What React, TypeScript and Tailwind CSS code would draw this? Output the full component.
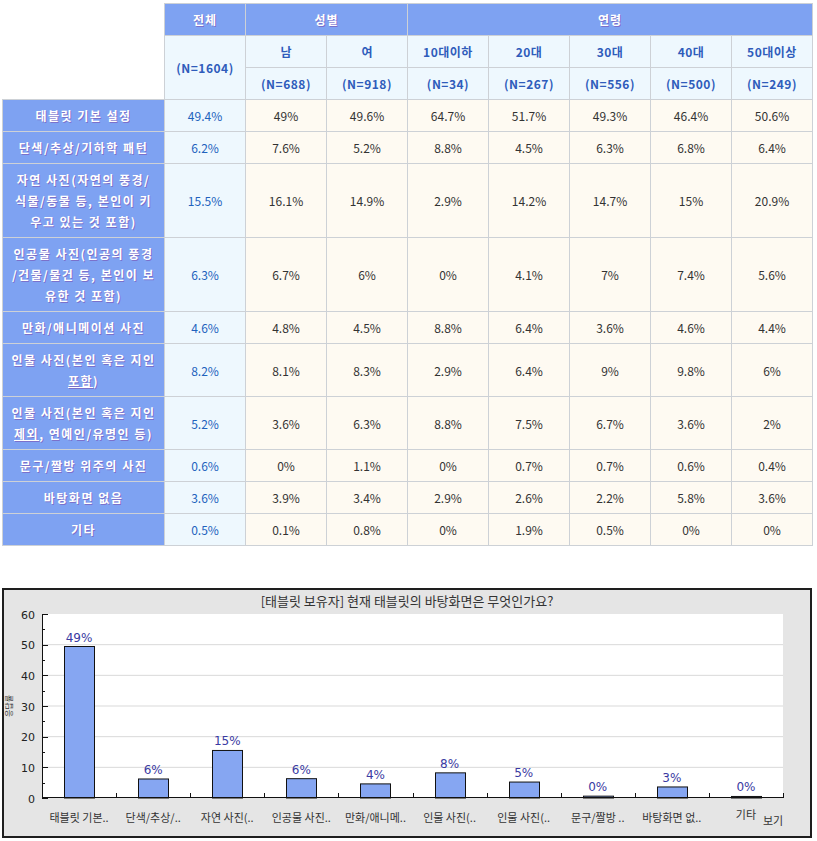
import React from "react";

const KR = '"Noto Sans CJK KR", "Noto Sans", sans-serif';

type Row = { label: React.ReactNode[]; vals: string[] };

const rows: Row[] = [
  { label: ["태블릿 기본 설정"], vals: ["49.4%", "49%", "49.6%", "64.7%", "51.7%", "49.3%", "46.4%", "50.6%"] },
  { label: ["단색/추상/기하학 패턴"], vals: ["6.2%", "7.6%", "5.2%", "8.8%", "4.5%", "6.3%", "6.8%", "6.4%"] },
  {
    label: ["자연 사진(자연의 풍경/", "식물/동물 등, 본인이 키", "우고 있는 것 포함)"],
    vals: ["15.5%", "16.1%", "14.9%", "2.9%", "14.2%", "14.7%", "15%", "20.9%"],
  },
  {
    label: ["인공물 사진(인공의 풍경", "/건물/물건 등, 본인이 보", "유한 것 포함)"],
    vals: ["6.3%", "6.7%", "6%", "0%", "4.1%", "7%", "7.4%", "5.6%"],
  },
  { label: ["만화/애니메이션 사진"], vals: ["4.6%", "4.8%", "4.5%", "8.8%", "6.4%", "3.6%", "4.6%", "4.4%"] },
  {
    label: [
      "인물 사진(본인 혹은 지인",
      <>
        <u>포함</u>)
      </>,
    ],
    vals: ["8.2%", "8.1%", "8.3%", "2.9%", "6.4%", "9%", "9.8%", "6%"],
  },
  {
    label: [
      "인물 사진(본인 혹은 지인",
      <>
        <u>제외</u>, 연예인/유명인 등)
      </>,
    ],
    vals: ["5.2%", "3.6%", "6.3%", "8.8%", "7.5%", "6.7%", "3.6%", "2%"],
  },
  { label: ["문구/짤방 위주의 사진"], vals: ["0.6%", "0%", "1.1%", "0%", "0.7%", "0.7%", "0.6%", "0.4%"] },
  { label: ["바탕화면 없음"], vals: ["3.6%", "3.9%", "3.4%", "2.9%", "2.6%", "2.2%", "5.8%", "3.6%"] },
  { label: ["기타"], vals: ["0.5%", "0.1%", "0.8%", "0%", "1.9%", "0.5%", "0%", "0%"] },
];

const ages = ["10대이하", "20대", "30대", "40대", "50대이상"];
const ns = ["(N=688)", "(N=918)", "(N=34)", "(N=267)", "(N=556)", "(N=500)", "(N=249)"];

const chartData = [
  { name: "태블릿 기본..", v: 49.4, l: "49%" },
  { name: "단색/추상/..", v: 6.2, l: "6%" },
  { name: "자연 사진(..", v: 15.5, l: "15%" },
  { name: "인공물 사진..", v: 6.3, l: "6%" },
  { name: "만화/애니메..", v: 4.6, l: "4%" },
  { name: "인물 사진(..", v: 8.2, l: "8%" },
  { name: "인물 사진(..", v: 5.2, l: "5%" },
  { name: "문구/짤방 ..", v: 0.6, l: "0%" },
  { name: "바탕화면 없..", v: 3.6, l: "3%" },
  { name: "기타", v: 0.5, l: "0%" },
];

const blueHead =
  "border border-[#cdd1d6] bg-[#7ea2f2] text-white font-bold py-[5px] leading-[21px] text-center [text-shadow:1px_1px_0_rgba(120,70,170,0.55)]";
const lightHead =
  "border border-[#cdd1d6] bg-[#eef8fe] text-[#2f5cbb] font-bold py-[5px] leading-[21px] text-center";

function Chart() {
  const x0 = 42;
  const x1 = 783;
  const yTop = 614;
  const yBot = 798;
  const scale = (yBot - yTop) / 60;
  const cw = (x1 - x0) / 10;
  const VF = '"DejaVu Sans", Verdana, sans-serif';
  return (
    <svg width={806} height={226} viewBox="4 610 806 226" className="block overflow-visible">
      <rect x={x0} y={yTop} width={x1 - x0} height={yBot - yTop} fill="#ffffff" />
      {[10, 20, 30, 40, 50].map((g) => (
        <line key={g} x1={x0} x2={x1} y1={yBot - g * scale} y2={yBot - g * scale} stroke="#d9d9d9" strokeWidth={1} />
      ))}
      {/* y axis */}
      <line x1={x0 + 0.5} x2={x0 + 0.5} y1={yTop} y2={yBot} stroke="#111" strokeWidth={1} />
      {[0, 10, 20, 30, 40, 50, 60].map((g) => (
        <g key={g}>
          <line x1={x0} x2={x0 + 6} y1={Math.round(yBot - g * scale) + 0.5} y2={Math.round(yBot - g * scale) + 0.5} stroke="#111" />
          <text
            x={35}
            y={yBot - g * scale + 1}
            textAnchor="end"
            dominantBaseline="central"
            fontFamily={VF}
            fontSize={11}
            fill="#222"
          >
            {g}
          </text>
        </g>
      ))}
      {[5, 15, 25, 35, 45, 55].map((g) => (
        <line key={g} x1={x0} x2={x0 + 3} y1={Math.round(yBot - g * scale) + 0.5} y2={Math.round(yBot - g * scale) + 0.5} stroke="#111" />
      ))}
      {/* bars */}
      {chartData.map((d, i) => {
        const cx = x0 + cw * (i + 0.5);
        const h = d.v * scale;
        return (
          <g key={i}>
            <rect x={Math.round(cx - 15) + 0.5} y={yBot - h} width={30} height={h} fill="#86a6f2" stroke="#111" strokeWidth={1} />
            <text
              x={cx}
              y={yBot - h - 9}
              textAnchor="middle"
              dominantBaseline="central"
              fontFamily={VF}
              fontSize={12}
              fill="#3a3aa2"
            >
              {d.l}
            </text>
            <text
              x={cx}
              y={i === 9 ? 814 : 817}
              textAnchor="middle"
              dominantBaseline="central"
              fontFamily={KR}
              fontSize={11}
              fill="#333"
            >
              {d.name}
            </text>
          </g>
        );
      })}
      {/* x axis */}
      <line x1={x0} x2={x1} y1={yBot - 0.5} y2={yBot - 0.5} stroke="#111" strokeWidth={1} />
      {Array.from({ length: 10 }).map((_, i) => (
        <line
          key={i}
          x1={Math.round(x0 + cw * (i + 1)) + 0.5}
          x2={Math.round(x0 + cw * (i + 1)) + 0.5}
          y1={yBot - 5}
          y2={yBot}
          stroke="#111"
        />
      ))}
      <text x={773} y={820} textAnchor="middle" dominantBaseline="central" fontFamily={KR} fontSize={11} fill="#333">
        보기
      </text>
      <text
        x={8}
        y={706}
        textAnchor="middle"
        dominantBaseline="central"
        fontFamily={KR}
        fontSize={8}
        fill="#333"
        transform="rotate(-90 8 706)"
      >
        응답률
      </text>
    </svg>
  );
}

export default function App() {
  return (
    <div className="bg-white w-[817px] min-h-[841px] pt-[3px] pl-[2px]" style={{ fontFamily: KR }}>
      <table className="border-collapse table-fixed w-[811px] text-[12px]">
        <colgroup>
          <col className="w-[162px]" />
          {Array.from({ length: 8 }).map((_, i) => (
            <col key={i} className="w-[81px]" />
          ))}
        </colgroup>
        <thead>
          <tr>
            <td rowSpan={3} className="border-0 bg-white" />
            <th className={blueHead + " tracking-[1px]"}>전체</th>
            <th colSpan={2} className={blueHead + " tracking-[1px]"}>
              성별
            </th>
            <th colSpan={5} className={blueHead + " tracking-[1px]"}>
              연령
            </th>
          </tr>
          <tr>
            <td rowSpan={2} className={lightHead + " tracking-[0.5px]"}>
              (N=1604)
            </td>
            <td className={lightHead}>남</td>
            <td className={lightHead}>여</td>
            {ages.map((a) => (
              <td key={a} className={lightHead + " tracking-[0.5px]"}>
                {a}
              </td>
            ))}
          </tr>
          <tr>
            {ns.map((n) => (
              <td key={n} className={lightHead + " tracking-[0.5px]"}>
                {n}
              </td>
            ))}
          </tr>
        </thead>
        <tbody>
          {rows.map((r, ri) => (
            <tr key={ri}>
              <td className={blueHead + " whitespace-nowrap tracking-[1.5px] px-0"}>
                {r.label.map((l, li) => (
                  <div key={li}>{l}</div>
                ))}
              </td>
              {r.vals.map((v, vi) => (
                <td
                  key={vi}
                  className={
                    "border border-[#cdd1d6] text-center py-[5px] leading-[21px] " +
                    (vi === 0 ? "bg-[#eef8fe] text-[#2162bd]" : "bg-[#fefaf2] text-[#333333]")
                  }
                >
                  {v}
                </td>
              ))}
            </tr>
          ))}
        </tbody>
      </table>

      <div className="mt-[42px] w-[810px] h-[250px] border-2 border-[#1e1e1e] bg-[#e5e5e5] flex flex-col">
        <div className="h-[20px] leading-[22px] text-center text-[13px] text-[#333]">
          [태블릿 보유자] 현재 태블릿의 바탕화면은 무엇인가요?
        </div>
        <Chart />
      </div>
    </div>
  );
}
